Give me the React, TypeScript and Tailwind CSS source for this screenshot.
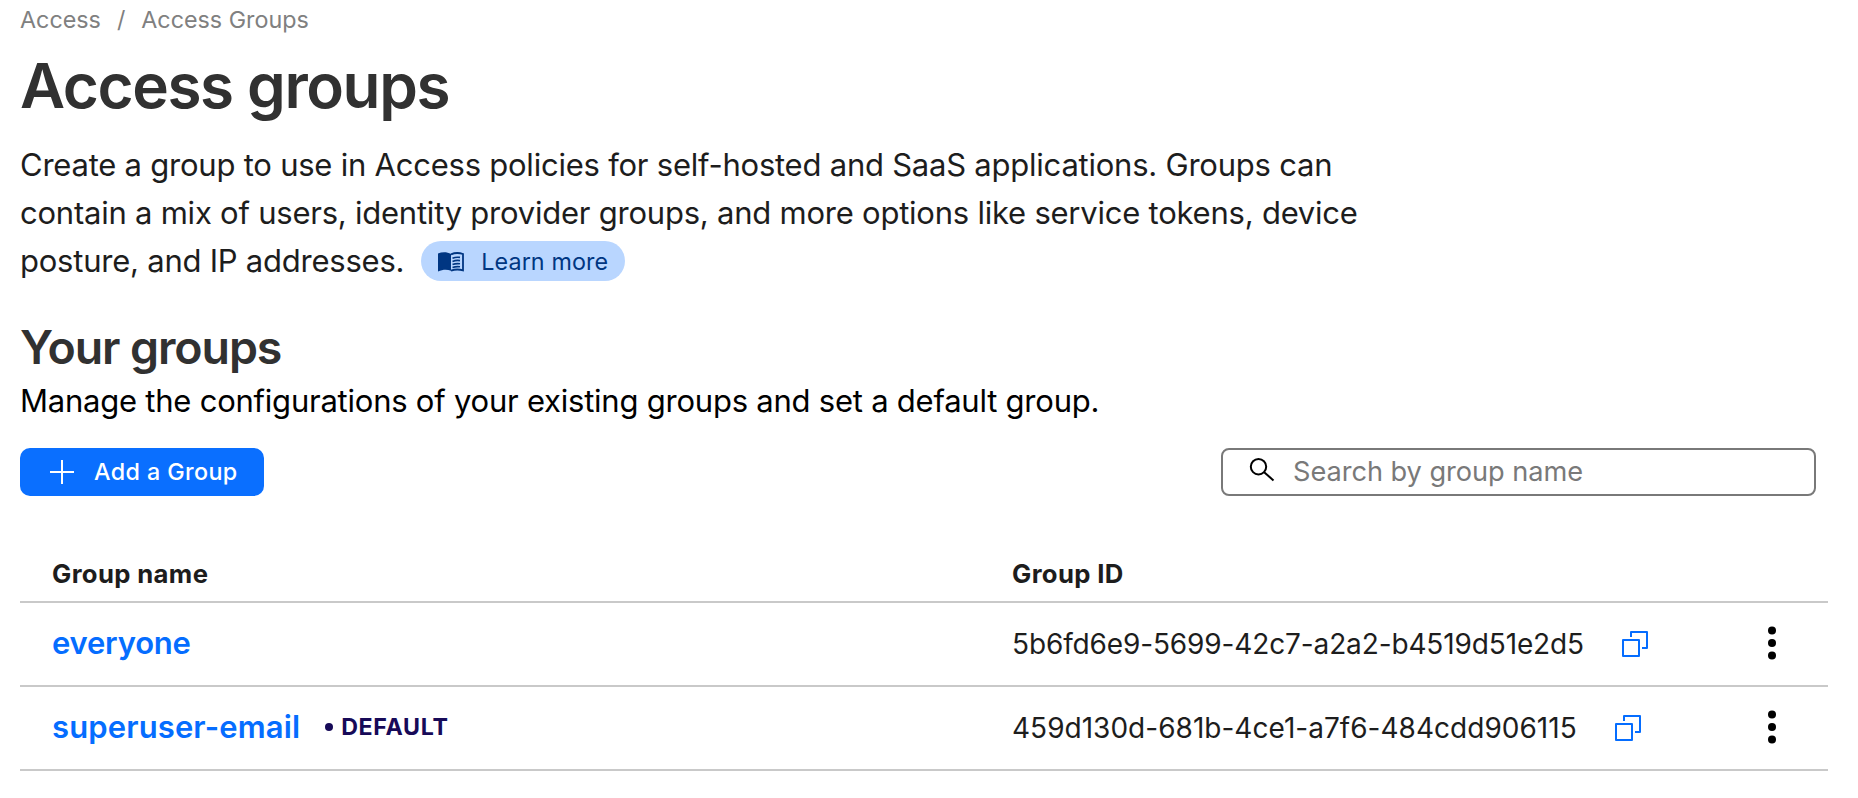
import React from "react";

const groups = [
  { name: "everyone", id: "5b6fd6e9-5699-42c7-a2a2-b4519d51e2d5", isDefault: false, nameTracking: "tracking-[-0.2px]", idTracking: "tracking-[-0.13px]" },
  { name: "superuser-email", id: "459d130d-681b-4ce1-a7f6-484cdd906115", isDefault: true, nameTracking: "tracking-[0.13px]", idTracking: "tracking-[0.02px]" },
];

function BookIcon() {
  return (
    <svg width="26" height="20" viewBox="0 0 26 20" fill="none" aria-hidden="true">
      <path d="M0 1.6C4 -.2 9 -.1 13 1.9V18.800C9 17.200 5 17.300 0 19.500z" fill="#003682" />
      <path
        d="M13 2.400C17 .6 21 .6 25 2V18.300C21 17.200 17 17.200 13 18.600"
        stroke="#003682"
        strokeWidth="1.800"
      />
      <path
        d="M14.500 6.200q3.500-1.400 7.500-.8M14.500 9.400q3.500-1.400 7.500-.8M14.500 12.600q3.500-1.400 7.500-.8M14.500 15.600q3.500-1.400 7.500-.8"
        stroke="#003682"
        strokeWidth="1.600"
      />
    </svg>
  );
}

function PlusIcon() {
  return (
    <svg width="24" height="24" viewBox="0 0 24 24" fill="none" aria-hidden="true">
      <path d="M12 0v24M0 12h24" stroke="white" strokeWidth="2" />
    </svg>
  );
}

function SearchIcon() {
  return (
    <svg className="-mt-[2px]" width="26" height="26" viewBox="0 0 26 26" fill="none" aria-hidden="true">
      <circle cx="9.500" cy="8.700" r="7.700" stroke="black" strokeWidth="2" />
      <path d="M14.900 13.900L24.500 22.400" stroke="black" strokeWidth="2" />
    </svg>
  );
}

function CopyIcon() {
  return (
    <svg width="26" height="26" viewBox="0 0 26 26" fill="none" stroke="#056DFF" strokeWidth="2" strokeLinejoin="round" aria-hidden="true">
      <path d="M1 9h16v16H1z" />
      <path d="M9 6V1h16v16h-5" />
    </svg>
  );
}

function MoreIcon() {
  return (
    <svg width="8" height="34" viewBox="0 0 8 34" fill="black" aria-hidden="true">
      <circle cx="4" cy="4.500" r="4" />
      <circle cx="4" cy="17" r="4" />
      <circle cx="4" cy="29.500" r="4" />
    </svg>
  );
}

export default function App() {
  return (
    <main className="h-[798px] w-[1858px] overflow-hidden bg-white pl-5 font-['Inter',sans-serif] text-[#1d1d1d] [font-variation-settings:'opsz'_14]">
      <nav className="flex h-10 items-center gap-4 text-[23.3px] text-[#808080]">
        <span>Access</span>
        <span>/</span>
        <span>Access Groups</span>
      </nav>
      <h1 className="mt-[6px] h-20 text-[62px] leading-[80px] font-semibold tracking-[-1.4px] text-[#313131]">Access groups</h1>
      <p className="mt-[15px] text-[31px] leading-[48px] tracking-[-0.23px]">
        <span className="block whitespace-nowrap">Create a group to use in Access policies for self-hosted and SaaS applications. Groups can</span>
        <span className="block whitespace-nowrap">contain a mix of users, identity provider groups, and more options like service tokens, device</span>
        <span className="flex items-center">
          posture, and IP addresses.
          <a className="ml-[17px] flex h-10 w-[204px] items-center gap-[17px] rounded-full bg-[#b9d6ff] pt-px pl-[17px] text-[23.3px] tracking-[0.1px] text-[#003682]">
            <BookIcon />
            Learn more
          </a>
        </span>
      </p>
      <h2 className="mt-[32px] h-[60px] text-[46.500px] leading-[60px] font-semibold tracking-[-1.1px] text-[#313131]">Your groups</h2>
      <p className="h-12 text-[31px] leading-[48px] tracking-[-0.23px] text-black">
        Manage the configurations of your existing groups and set a default group.
      </p>
      <div className="mt-[23px] flex justify-between pr-[42px]">
        <button className="flex h-12 w-[244px] items-center gap-5 rounded-[10px] bg-[#0a6fff] pl-[30px] text-[23.3px] font-medium tracking-[0.4px] text-white">
          <PlusIcon />
          <span className="mt-px">Add a Group</span>
        </button>
        <div className="flex h-12 w-[595px] items-center gap-[18px] rounded-[8px] border-2 border-[#797979] pl-[26px] text-[27.2px] tracking-[-0.05px] text-[#797979]">
          <SearchIcon />
          <span className="mt-px">Search by group name</span>
        </div>
      </div>
      <section className="mt-[48px] w-[1808px]">
        <div className="flex h-[59px] items-center border-b-2 border-[#c9c9c9] pt-[4px] pl-8 text-[25.700px] font-bold tracking-[0.35px]">
          <span className="w-[960px]">Group name</span>
          <span>Group ID</span>
        </div>
        {groups.map((g) => (
          <div key={g.id} className="flex h-[84px] items-center border-b-2 border-[#c9c9c9] pr-[52px] pl-8">
            <div className="-mt-[2px] flex w-[960px] items-center">
              <a className={`text-[31px] font-semibold text-[#056dff] ${g.nameTracking}`}>{g.name}</a>
              {g.isDefault && (
                <span className="ml-[25px] flex items-center gap-[8px] text-[23.200px] font-bold tracking-[0.7px] text-[#170a58]">
                  <span className="size-2 rounded-full bg-[#170a58]" />
                  DEFAULT
                </span>
              )}
            </div>
            <span className={`mr-[38px] text-[28px] ${g.idTracking}`}>{g.id}</span>
            <CopyIcon />
            <span className="-mt-[2px] ml-auto">
              <MoreIcon />
            </span>
          </div>
        ))}
      </section>
    </main>
  );
}
